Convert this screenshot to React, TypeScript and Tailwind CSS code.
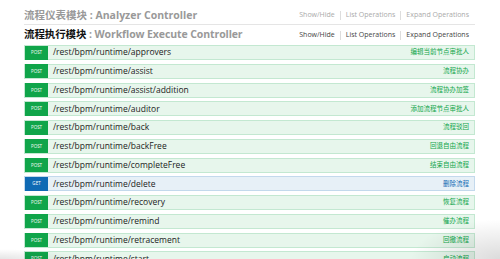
import React from "react";

type Op = { method: "POST" | "GET"; path: string; desc: string };

const ops: Op[] = [
  { method: "POST", path: "/rest/bpm/runtime/approvers", desc: "编辑当前节点审批人" },
  { method: "POST", path: "/rest/bpm/runtime/assist", desc: "流程协办" },
  { method: "POST", path: "/rest/bpm/runtime/assist/addition", desc: "流程协办加签" },
  { method: "POST", path: "/rest/bpm/runtime/auditor", desc: "添加流程节点审批人" },
  { method: "POST", path: "/rest/bpm/runtime/back", desc: "流程驳回" },
  { method: "POST", path: "/rest/bpm/runtime/backFree", desc: "回退自由流程" },
  { method: "POST", path: "/rest/bpm/runtime/completeFree", desc: "结束自由流程" },
  { method: "GET", path: "/rest/bpm/runtime/delete", desc: "删除流程" },
  { method: "POST", path: "/rest/bpm/runtime/recovery", desc: "恢复流程" },
  { method: "POST", path: "/rest/bpm/runtime/remind", desc: "催办流程" },
  { method: "POST", path: "/rest/bpm/runtime/retracement", desc: "回撤流程" },
  { method: "POST", path: "/rest/bpm/runtime/start", desc: "启动流程" },
];

const font = { fontFamily: '"Open Sans", "Noto Sans CJK SC", sans-serif' };

function Links({ dark }: { dark?: boolean }) {
  const c = dark ? "text-[#444]" : "text-[#aaa]";
  return (
    <div className={`flex items-center text-[7px] ${c}`}>
      <span className="pr-[5px]">Show/Hide</span>
      <span className="h-[9px] w-px bg-[#ddd]" />
      <span className="px-[5px]">List Operations</span>
      <span className="h-[9px] w-px bg-[#ddd]" />
      <span className="pl-[5px]">Expand Operations</span>
    </div>
  );
}

function Row({ op }: { op: Op }) {
  const get = op.method === "GET";
  return (
    <div
      className={`flex h-[15px] shrink-0 items-center border ${
        get ? "border-[#c3d9ec] bg-[#e7f0f7]" : "border-[#c3e8d1] bg-[#e7f6ec]"
      }`}
    >
      <div
        className={`flex h-[14px] w-[23px] items-center justify-center text-[4.5px] text-white ${
          get ? "bg-[#0f6ab4]" : "bg-[#10a54a]"
        }`}
      >
        {op.method}
      </div>
      <div className="ml-[5px] flex-1 text-[8.5px] leading-none text-[#222]">{op.path}</div>
      <div className={`mr-[5px] text-[6.5px] leading-none ${get ? "text-[#0f6ab4]" : "text-[#10a54a]"}`}>
        {op.desc}
      </div>
    </div>
  );
}

export default function App() {
  return (
    <div className="relative h-[259px] w-[500px] overflow-hidden bg-white" style={font}>
      <div className="ml-[24px] w-[451px] pt-[7px]">
        <div className="flex h-[18px] items-center justify-between border-b border-[#e5e5e5]">
          <div className="text-[10.5px] font-bold text-[#999]">流程仪表模块 : Analyzer Controller</div>
          <div className="mr-[6px]">
            <Links />
          </div>
        </div>
        <div className="flex h-[20px] items-center justify-between">
          <div className="text-[10.5px] font-bold tracking-[-0.1px] text-[#999]">
            <span className="text-[#111]">流程执行模块</span> : Workflow Execute Controller
          </div>
          <div className="mr-[6px]">
            <Links dark />
          </div>
        </div>
        <div className="flex flex-col gap-[3.75px]">
          {ops.map((op) => (
            <Row key={op.path} op={op} />
          ))}
        </div>
      </div>
      <div className="pointer-events-none absolute bottom-0 right-0 h-[40px] w-[90px] bg-[radial-gradient(ellipse_at_bottom_right,rgba(0,0,0,0.14),rgba(0,0,0,0)_70%)]" />
      <div className="pointer-events-none absolute bottom-0 left-0 h-[10px] w-[80px] bg-[radial-gradient(ellipse_at_bottom_left,rgba(0,0,0,0.1),rgba(0,0,0,0)_70%)]" />
    </div>
  );
}
